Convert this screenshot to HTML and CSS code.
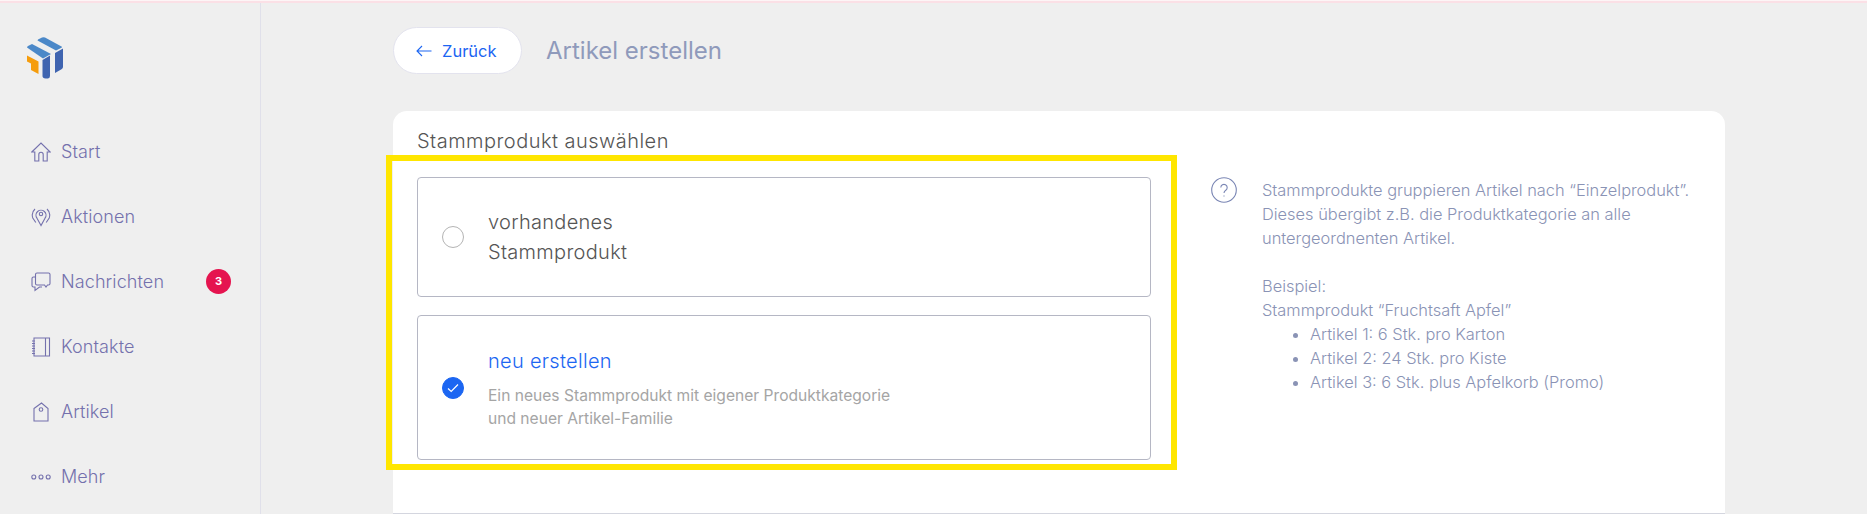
FILE: index.html
```html
<!DOCTYPE html>
<html lang="de">
<head>
	<meta charset="UTF-8">
	<title>Artikel erstellen</title>
	<link rel="stylesheet" href="styles.css">
</head>
<body>
	<div class="topline"></div>
	<div class="app">
		<aside class="sidebar">
			<svg class="logo" viewBox="0 0 36 42" width="36" height="42">
				<path fill="#4b88c8" d="M11 2.500 15 .5q1.500-.7 3 0L34.500 9.500q1 .6 0 1.200L29 13.500 10.500 3.500z"/>
				<path fill="#4b88c8" d="M0 10.500q0-1 1-1.500L5 7 24 17 16 21.500z"/>
				<path fill="#3f64b0" d="M15.500 23 23 18.500V39q0 2-2 2.500h-2.500Q15.500 41 15.500 39z"/>
				<path fill="#3f64b0" d="M28 16 36 11.500V30q0 1.500-1.500 2.300L28 36z"/>
				<path fill="#f59c0c" d="M0 18.500 11.500 24.500V37L4 33V26.500L0 24.500z"/>
			</svg>
			<nav class="nav">
				<a class="nav-item" href="#">
					<svg class="nav-icon" viewBox="0 0 20 20"><path d="M.8 10 10 1l9.200 9h-3v9h-4v-6.500a2 2 0 0 0-4.400 0V19h-4v-9z"/></svg>
					<span>Start</span>
				</a>
				<a class="nav-item" href="#">
					<svg class="nav-icon" viewBox="0 0 20 20"><path d="M10 18.500 6 11.200a5 5 0 1 1 8 0z"/><circle cx="10" cy="7" r="1.700"/><path d="M4 2A8.500 8.500 0 0 0 1.800 11l3 4.500M16 2a8.500 8.500 0 0 1 2.200 9l-3 4.500"/></svg>
					<span>Aktionen</span>
				</a>
				<a class="nav-item" href="#">
					<svg class="nav-icon" viewBox="0 0 20 20"><path d="M6 1h11.500A1.500 1.500 0 0 1 19 2.500v9a1.500 1.500 0 0 1-1.500 1.500h-1L15 15l-1.500-2H6a1.500 1.500 0 0 1-1.500-1.500v-9A1.500 1.500 0 0 1 6 1z"/><path d="M4.500 5h-2A1.500 1.500 0 0 0 1 6.500v7A1.500 1.500 0 0 0 2.500 15H4v3.500L8.500 15H11"/></svg>
					<span>Nachrichten</span>
					<b class="badge">3</b>
				</a>
				<a class="nav-item" href="#">
					<svg class="nav-icon" viewBox="0 0 20 20"><path d="M3 1h15.500v18H3zM14.500 1v18M1 4h3M1 6.500h3M1 9h3M1 11.500h3M1 14h3M1 16.500h3"/></svg>
					<span>Kontakte</span>
				</a>
				<a class="nav-item" href="#">
					<svg class="nav-icon" viewBox="0 0 20 20"><path d="M3 6.500 10.500 1 17 6.500V19H3z"/><circle cx="10" cy="7.500" r="1.800"/></svg>
					<span>Artikel</span>
				</a>
				<a class="nav-item" href="#">
					<svg class="nav-icon" viewBox="0 0 20 20"><circle cx="2.800" cy="10" r="2"/><circle cx="10" cy="10" r="2"/><circle cx="17.200" cy="10" r="2"/></svg>
					<span>Mehr</span>
				</a>
			</nav>
		</aside>
		<main class="main">
			<header class="page-head">
				<a class="back-btn" href="#">
					<svg class="back-icon" viewBox="0 0 16 12" width="16" height="12"><path d="M15.500 6H1M6 1 1 6l5 5"/></svg>
					Zurück
				</a>
				<h1 class="page-title">Artikel erstellen</h1>
			</header>
			<section class="card">
				<h2 class="card-title">Stammprodukt auswählen</h2>
				<div class="card-row">
					<div class="marked">
						<label class="option option-first">
							<span class="radio"></span>
							<span class="option-name">vorhandenes<br>Stammprodukt</span>
						</label>
						<label class="option option-second">
							<span class="radio radio-on">
								<svg viewBox="0 0 12 10" width="12" height="10"><path d="M1 5.500 4.200 8.500 11 1.500"/></svg>
							</span>
							<span>
								<span class="option-name option-name-on">neu erstellen</span>
								<span class="option-desc">Ein neues Stammprodukt mit eigener Produktkategorie<br>und neuer Artikel-Familie</span>
							</span>
						</label>
					</div>
					<div class="help">
						<svg class="help-icon" viewBox="0 0 26 26" width="26" height="26"><circle cx="13" cy="13" r="12.300"/><path d="M9.800 10.500a3.200 3.200 0 1 1 5 2.700c-1.200.8-1.800 1.400-1.800 2.800"/><path d="M13 18.500v1"/></svg>
						<div class="help-text">
							<p>Stammprodukte gruppieren Artikel nach “Einzelprodukt”.<br>Dieses übergibt z.B. die Produktkategorie an alle<br>untergeordnenten Artikel.</p>
							<p>Beispiel:<br>Stammprodukt “Fruchtsaft Apfel”</p>
							<ul>
								<li>Artikel 1: 6 Stk. pro Karton</li>
								<li>Artikel 2: 24 Stk. pro Kiste</li>
								<li>Artikel 3: 6 Stk. plus Apfelkorb (Promo)</li>
							</ul>
						</div>
					</div>
				</div>
			</section>
		</main>
	</div>
</body>
</html>
```

FILE: styles.css
```css
html *{
	padding:0;
	margin:0;
	box-sizing:border-box;
}
html,body{
	height:514px;
	overflow:hidden;
}
body{
	background-color:#efefef;
	font-family:Inter,"Liberation Sans",sans-serif;
}
a{
	text-decoration:none;
}
.topline{
	height:3px;
	background-color:#fbe0e6;
	border-top:1px solid #fdf5f6;
}
.app{
	display:flex;
	height:511px;
}

/* sidebar */
.sidebar{
	width:261px;
	flex:none;
	border-right:1px solid #e0e0ea;
	padding:34px 0 0 27px;
}
.logo{
	display:block;
}
.nav{
	display:flex;
	flex-direction:column;
	margin-top:40px;
}
.nav-item{
	display:flex;
	align-items:center;
	height:65px;
	padding-left:4px;
	font-size:18px;
	font-weight:300;
	letter-spacing:.1px;
	color:#7471ad;
}
.nav-icon{
	width:20px;
	height:20px;
	margin-right:10px;
	fill:none;
	stroke:#7471ad;
	stroke-width:1.100;
}
.badge{
	width:25px;
	height:25px;
	margin-left:auto;
	margin-right:29px;
	border-radius:50%;
	background-color:#e5144f;
	color:#fff;
	font-size:11px;
	font-weight:700;
	line-height:25px;
	letter-spacing:0;
	text-align:center;
}

/* main */
.main{
	width:1332px;
	margin-left:132px;
}
.page-head{
	display:flex;
	align-items:center;
	height:47px;
	margin-top:24px;
}
.back-btn{
	display:flex;
	align-items:center;
	width:129px;
	height:47px;
	padding-left:22px;
	border:1px solid #e3e3ee;
	border-radius:24px;
	background-color:#fff;
	color:#1c66f2;
	font-size:16.500px;
}
.back-icon{
	margin-right:10px;
	fill:none;
	stroke:#1c66f2;
	stroke-width:1.100;
}
.page-title{
	margin-left:24px;
	font-size:24px;
	font-weight:400;
	color:#8f9abb;
}
.card{
	height:403px;
	margin-top:37px;
	padding:16px 0 0 24px;
	border-bottom:1px solid #d4d6df;
	border-radius:14px 14px 0 0;
	background-color:#fff;
}
.card-title{
	height:28px;
	font-size:20px;
	font-weight:350;
	line-height:28px;
	letter-spacing:.47px;
	color:#555;
}
.card-row{
	display:flex;
	margin-left:-31px;
}

/* yellow frame round the two options */
.marked{
	width:791px;
	height:315px;
	flex:none;
	padding:16px 20px 0 25px;
	border:6px solid #ffe600;
}
.option{
	display:flex;
	align-items:center;
	padding-left:24px;
	border:1px solid #b5b7c4;
	border-radius:4px;
}
.option-first{
	height:120px;
	margin-bottom:18px;
}
.option-second{
	height:145px;
}
.radio{
	display:flex;
	align-items:center;
	justify-content:center;
	width:22px;
	height:22px;
	flex:none;
	margin-right:24px;
	border:1px solid #b4b4b4;
	border-radius:50%;
}
.radio-on{
	border-color:#1c66f2;
	background-color:#1c66f2;
}
.radio-on svg{
	fill:none;
	stroke:#fff;
	stroke-width:1.200;
}
.option-name{
	display:block;
	font-size:20px;
	font-weight:350;
	line-height:30px;
	letter-spacing:.3px;
	color:#555;
}
.option-name-on{
	margin-bottom:8px;
	color:#1c66f2;
}
.option-desc{
	display:block;
	font-size:15.600px;
	line-height:23px;
	color:#a5a5a5;
}

/* help text */
.help{
	display:flex;
	padding:22px 0 0 34px;
}
.help-icon{
	flex:none;
	fill:none;
	stroke:#7a86b4;
	stroke-width:1.100;
}
.help-text{
	margin-left:25px;
	padding-top:1px;
	font-size:16.400px;
	font-weight:300;
	line-height:24px;
	color:#8a93b5;
}
.help-text p{
	margin-bottom:24px;
}
.help-text p + p{
	margin-bottom:0;
}
.help-text ul{
	padding-left:48px;
}
```
